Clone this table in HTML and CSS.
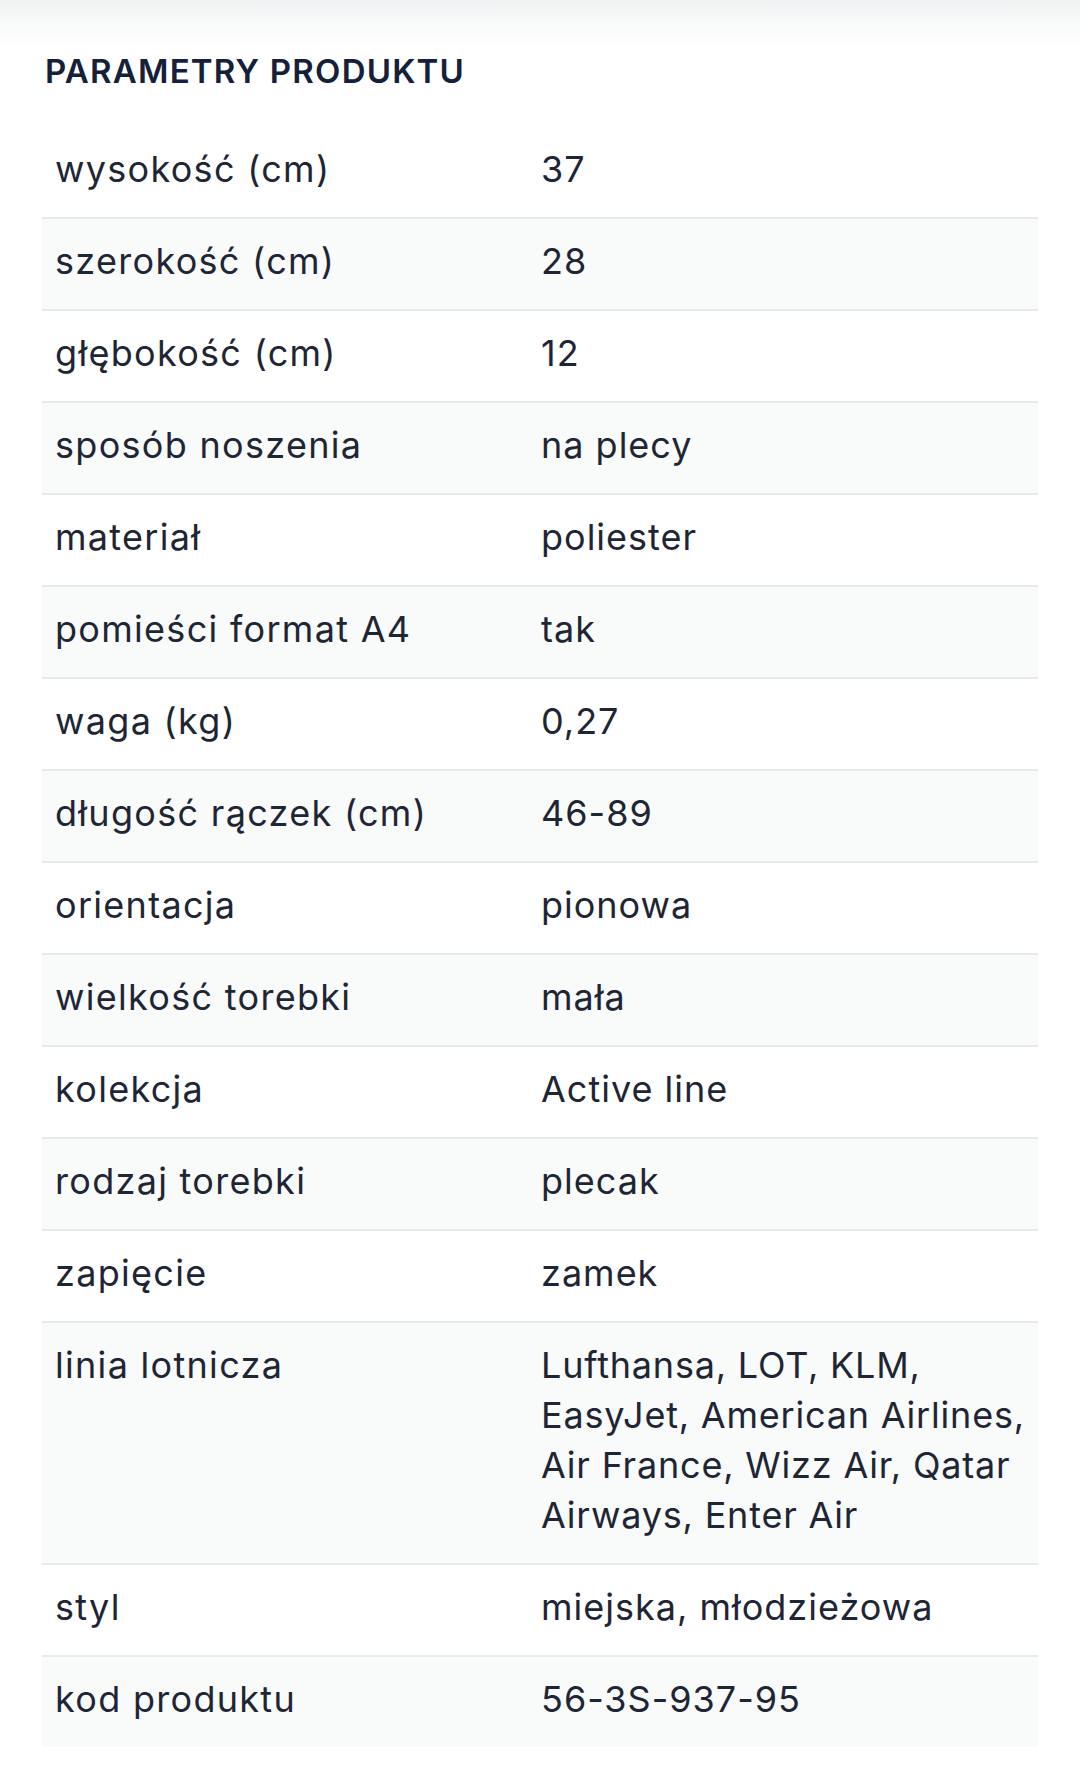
FILE: index.html
```html
<!DOCTYPE html>
<html lang="pl">
<head>
<meta charset="utf-8">
<title>Parametry produktu</title>
<link rel="stylesheet" href="styles.css">
</head>
<body>
<div class="page">
  <h2 class="title">PARAMETRY PRODUKTU</h2>
  <div class="params">
    <div class="row"><div class="label">wysokość (cm)</div><div class="value">37</div></div>
    <div class="row"><div class="label">szerokość (cm)</div><div class="value">28</div></div>
    <div class="row"><div class="label">głębokość (cm)</div><div class="value">12</div></div>
    <div class="row"><div class="label">sposób noszenia</div><div class="value">na plecy</div></div>
    <div class="row"><div class="label">materiał</div><div class="value">poliester</div></div>
    <div class="row"><div class="label">pomieści format A4</div><div class="value">tak</div></div>
    <div class="row"><div class="label">waga (kg)</div><div class="value">0,27</div></div>
    <div class="row"><div class="label">długość rączek (cm)</div><div class="value">46-89</div></div>
    <div class="row"><div class="label">orientacja</div><div class="value">pionowa</div></div>
    <div class="row"><div class="label">wielkość torebki</div><div class="value">mała</div></div>
    <div class="row"><div class="label">kolekcja</div><div class="value">Active line</div></div>
    <div class="row"><div class="label">rodzaj torebki</div><div class="value">plecak</div></div>
    <div class="row"><div class="label">zapięcie</div><div class="value">zamek</div></div>
    <div class="row"><div class="label">linia lotnicza</div><div class="value"><span class="line">Lufthansa, LOT, KLM,</span><span class="line">EasyJet, American Airlines,</span><span class="line">Air France, Wizz Air, Qatar</span><span class="line">Airways, Enter Air</span></div></div>
    <div class="row"><div class="label">styl</div><div class="value">miejska, młodzieżowa</div></div>
    <div class="row"><div class="label">kod produktu</div><div class="value">56-3S-937-95</div></div>
  </div>
</div>
</body>
</html>
```
FILE: styles.css
```css
html, body {
  margin: 0;
  padding: 0;
  background: #ffffff;
}
body {
  font-family: Inter, "Noto Sans", "DejaVu Sans", sans-serif;
  color: #1e2636;
}
.page {
  min-height: 1778px;
  box-sizing: border-box;
  padding: 46px 42px 0 42px;
  background: linear-gradient(#eff1f2 0px, #f8f9f9 22px, #ffffff 50px) no-repeat;
  background-size: 100% 50px;
}
.title {
  margin: 0 0 0 3px;
  font-size: 33px;
  line-height: 50px;
  font-weight: 600;
  letter-spacing: 1.2px;
  color: #15203a;
}
.params {
  margin-top: 31px;
  display: flex;
  flex-direction: column;
}
.row {
  display: grid;
  grid-template-columns: 486px 1fr;
  border-bottom: 2px solid #e6ebed;
  background: #ffffff;
}
.row:nth-child(even) {
  background: #f9fafa;
}
.row:last-child {
  border-bottom: none;
}
.label, .value {
  padding: 17px 13px 23px 13px;
  font-size: 36px;
  line-height: 50px;
  letter-spacing: 1.3px;
  font-weight: 400;
}
.value {
  letter-spacing: 1px;
}
.value .line {
  display: block;
  white-space: nowrap;
  letter-spacing: 0.8px;
}
```
